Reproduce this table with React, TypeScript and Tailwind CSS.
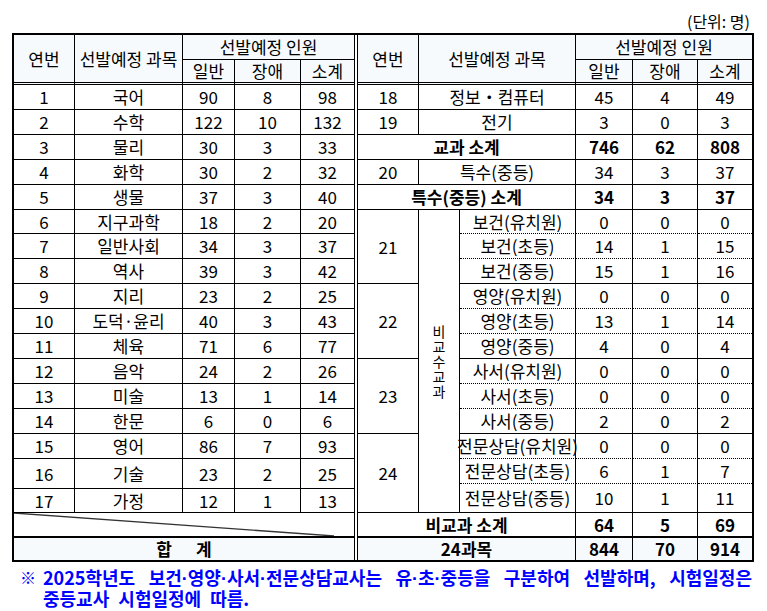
import React from 'react';

type Row = [number, string, number, number, number];

const leftRows: Row[] = [
  [1, '국어', 90, 8, 98],
  [2, '수학', 122, 10, 132],
  [3, '물리', 30, 3, 33],
  [4, '화학', 30, 2, 32],
  [5, '생물', 37, 3, 40],
  [6, '지구과학', 18, 2, 20],
  [7, '일반사회', 34, 3, 37],
  [8, '역사', 39, 3, 42],
  [9, '지리', 23, 2, 25],
  [10, '도덕·윤리', 40, 3, 43],
  [11, '체육', 71, 6, 77],
  [12, '음악', 24, 2, 26],
  [13, '미술', 13, 1, 14],
  [14, '한문', 6, 0, 6],
  [15, '영어', 86, 7, 93],
  [16, '기술', 23, 2, 25],
  [17, '가정', 12, 1, 13],
];

const groups: { no: number; items: [string, number, number, number][] }[] = [
  { no: 21, items: [['보건(유치원)', 0, 0, 0], ['보건(초등)', 14, 1, 15], ['보건(중등)', 15, 1, 16]] },
  { no: 22, items: [['영양(유치원)', 0, 0, 0], ['영양(초등)', 13, 1, 14], ['영양(중등)', 4, 0, 4]] },
  { no: 23, items: [['사서(유치원)', 0, 0, 0], ['사서(초등)', 0, 0, 0], ['사서(중등)', 2, 0, 2]] },
  { no: 24, items: [['전문상담(유치원)', 0, 0, 0], ['전문상담(초등)', 6, 1, 7], ['전문상담(중등)', 10, 1, 11]] },
];

const C: React.FC<{ className?: string; children?: React.ReactNode }> = ({ className = '', children }) => (
  <div className={`flex items-center justify-center whitespace-nowrap border-black ${className}`}>{children}</div>
);

const HEAD = 'bg-[#f6fafd]';
const DBL = 'border-b-[3px] [border-bottom-style:double]';

// 가운뎃점은 좁은 글꼴로
const Dot = () => <span className="font-['Liberation_Sans',sans-serif]">·</span>;

const App: React.FC = () => {
  return (
    <div className="w-[767px] h-[611px] bg-white text-black text-[17px] font-['Noto_Sans_CJK_KR',sans-serif] overflow-hidden">
      <div className="ml-[12px] w-[742px]">
        <div className="h-[33px] pt-[10px] pr-[4px] text-right text-[16px] leading-[22px]">(단위: 명)</div>

        <div className="flex border-2 border-black">
          {/* 왼쪽 표 */}
          <div className="grid grid-cols-[61px_108px_52px_66px_54px] grid-rows-[25px_25px_25px_25px_25px_25px_25px_24px_repeat(9,25px)_30px_24px_25px_22px]">
            <C className={`row-span-2 border-r ${DBL} ${HEAD}`}>연번</C>
            <C className={`row-span-2 border-r ${DBL} ${HEAD}`}>선발예정 과목</C>
            <C className={`col-span-3 border-r border-b ${HEAD}`}>선발예정 인원</C>
            <C className={`border-r ${DBL} ${HEAD}`}>일반</C>
            <C className={`border-r ${DBL} ${HEAD}`}>장애</C>
            <C className={`border-r ${DBL} ${HEAD}`}>소계</C>
            {leftRows.map((r) => (
              <React.Fragment key={r[0]}>
                <C className="border-r border-b">{r[0]}</C>
                <C className="border-r border-b">{r[1]}</C>
                <C className="border-r border-b">{r[2]}</C>
                <C className="border-r border-b">{r[3]}</C>
                <C className="border-r border-b">{r[4]}</C>
              </React.Fragment>
            ))}
            <div className="relative col-span-5 border-r border-b-2 border-black">
              <svg className="absolute inset-0 h-full w-full" viewBox="0 0 340 23" preserveAspectRatio="none">
                <line x1="0" y1="0" x2="320" y2="23" stroke="#333" strokeWidth="1.3" />
              </svg>
            </div>
            <C className={`col-span-5 border-r font-bold gap-[24px] ${HEAD}`}>
              <span>합</span>
              <span>계</span>
            </C>
          </div>

          <div className="w-[2px]" />

          {/* 오른쪽 표 */}
          <div className="grid border-l border-black grid-cols-[61px_41px_116px_57px_65px_54px] grid-rows-[25px_25px_repeat(5,25px)_24px_repeat(9,25px)_25px_29px_25px_22px]">
            <C className={`row-span-2 border-r ${DBL} ${HEAD}`}>연번</C>
            <C className={`col-span-2 row-span-2 border-r ${DBL} ${HEAD}`}>선발예정 과목</C>
            <C className={`col-span-3 border-b ${HEAD}`}>선발예정 인원</C>
            <C className={`border-r ${DBL} ${HEAD}`}>일반</C>
            <C className={`border-r ${DBL} ${HEAD}`}>장애</C>
            <C className={`${DBL} ${HEAD}`}>소계</C>

            <C className="border-r border-b">18</C>
            <C className="col-span-2 border-r border-b">정보・컴퓨터</C>
            <C className="border-r border-b">45</C>
            <C className="border-r border-b">4</C>
            <C className="border-b">49</C>

            <C className="border-r border-b">19</C>
            <C className="col-span-2 border-r border-b">전기</C>
            <C className="border-r border-b">3</C>
            <C className="border-r border-b">0</C>
            <C className="border-b">3</C>

            <C className="col-span-3 border-r border-b font-bold">교과 소계</C>
            <C className="border-r border-b font-bold">746</C>
            <C className="border-r border-b font-bold">62</C>
            <C className="border-b font-bold">808</C>

            <C className="border-r border-b">20</C>
            <C className="col-span-2 border-r border-b">특수(중등)</C>
            <C className="border-r border-b">34</C>
            <C className="border-r border-b">3</C>
            <C className="border-b">37</C>

            <C className="col-span-3 border-r border-b font-bold">특수(중등) 소계</C>
            <C className="border-r border-b font-bold">34</C>
            <C className="border-r border-b font-bold">3</C>
            <C className="border-b font-bold">37</C>

            {groups.map((g, gi) => (
              <React.Fragment key={g.no}>
                {g.items.map((it, i) => {
                  const bottom = i < 2 ? 'border-b [border-bottom-style:dotted]' : 'border-b';
                  return (
                    <React.Fragment key={it[0]}>
                      {i === 0 && <C className="row-span-3 border-r border-b">{g.no}</C>}
                      {gi === 0 && i === 0 && (
                        <C className="row-span-12 border-r border-b flex-col text-[14px] leading-[15px]">
                          <span>비</span>
                          <span>교</span>
                          <span>수</span>
                          <span>교</span>
                          <span>과</span>
                        </C>
                      )}
                      <C className={`border-r ${bottom}`}>{it[0]}</C>
                      <C className={`border-r ${bottom}`}>{it[1]}</C>
                      <C className={`border-r ${bottom}`}>{it[2]}</C>
                      <C className={bottom}>{it[3]}</C>
                    </React.Fragment>
                  );
                })}
              </React.Fragment>
            ))}

            <C className="col-span-3 border-r border-b-2 font-bold">비교과 소계</C>
            <C className="border-r border-b-2 font-bold">64</C>
            <C className="border-r border-b-2 font-bold">5</C>
            <C className="border-b-2 font-bold">69</C>

            <C className={`col-span-3 border-r font-bold ${HEAD}`}>24과목</C>
            <C className={`border-r font-bold ${HEAD}`}>844</C>
            <C className={`border-r font-bold ${HEAD}`}>70</C>
            <C className={`font-bold ${HEAD}`}>914</C>
          </div>
        </div>

        <div className="mt-[6px] flex leading-[19px] text-[#0000ff]">
          <span className="w-[31px] shrink-0 pl-[8px] text-[16px]">※</span>
          <div className="flex-1 pr-[2px] text-[18px] font-bold [word-spacing:5px]">
            <div className="whitespace-nowrap text-justify [text-align-last:justify]">
              2025학년도 보건<Dot />영양<Dot />사서<Dot />전문상담교사는 유<Dot />초<Dot />중등을 구분하여 선발하며, 시험일정은
            </div>
            <div>중등교사 시험일정에 따름.</div>
          </div>
        </div>
      </div>
    </div>
  );
};

export default App;
